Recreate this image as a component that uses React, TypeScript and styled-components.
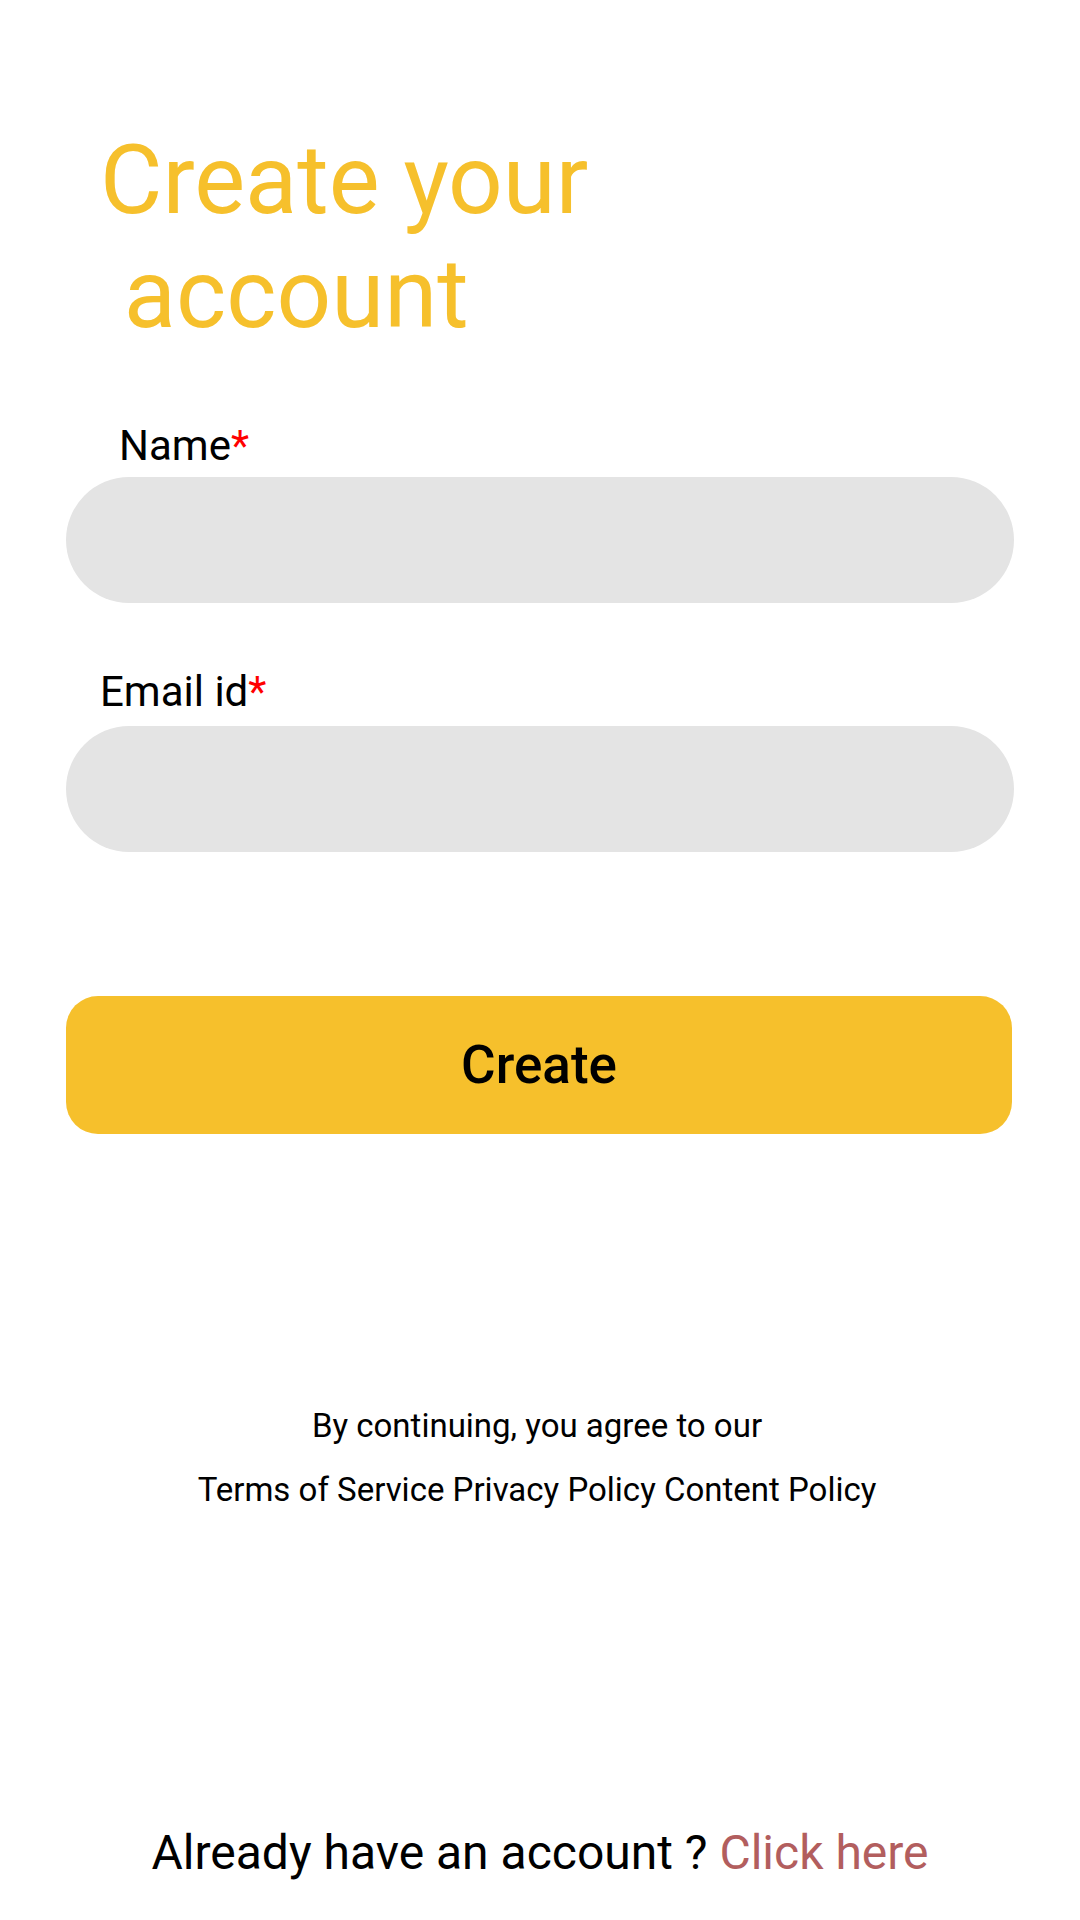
import styled, { createGlobalStyle } from "styled-components";

const GlobalStyle = createGlobalStyle`
  html, body {
    margin: 0;
    padding: 0;
    background: #ffffff;
  }

  body {
    font-family: Roboto, "Liberation Sans", Arial, sans-serif;
    color: #000000;
  }
`;

const Page = styled.div`
  width: 1080px;
  min-height: 1920px;
  display: flex;
  flex-direction: column;
  box-sizing: border-box;
`;

const Title = styled.h1`
  margin: 123px 0 0 100px;
  font-size: 96px;
  line-height: 114px;
  font-weight: 400;
  color: #f6c02c;
`;

const Label = styled.label<{ $indent: number; $gap: number }>`
  display: block;
  margin: ${({ $gap }) => $gap}px 0 0 ${({ $indent }) => $indent}px;
  font-size: 42px;
  line-height: 49px;
  font-weight: 400;
`;

const Required = styled.span`
  color: #ff0000;
`;

const Field = styled.input<{ $gap: number }>`
  display: block;
  margin: ${({ $gap }) => $gap}px 0 0 66px;
  width: 948px;
  height: 126px;
  box-sizing: border-box;
  padding: 0 48px;
  border: none;
  border-radius: 63px;
  background: #e4e4e4;
  font-family: inherit;
  font-size: 40px;
  outline: none;
`;

const CreateButton = styled.button`
  margin: 144px 0 0 66px;
  width: 946px;
  height: 138px;
  border: none;
  border-radius: 32px;
  background: #f6c02c;
  color: #000000;
  font-family: inherit;
  font-size: 53px;
  font-weight: 500;
  cursor: pointer;
`;

const Terms = styled.div`
  margin-top: 273px;
  padding-right: 6px;
  display: flex;
  flex-direction: column;
  align-items: center;
  gap: 26px;
  font-size: 33px;
  line-height: 38px;
`;

const Footer = styled.p`
  margin: 316px 0 0;
  text-align: center;
  font-size: 48px;
  line-height: 56px;
`;

const LinkText = styled.a`
  color: #b25e5e;
  text-decoration: none;
  cursor: pointer;
`;

export default function App() {
  return (
    <>
      <GlobalStyle />
      <Page>
        <Title>
          Create your
          <br />
          {"\u00a0account"}
        </Title>

        <Label $indent={119} $gap={70}>
          Name<Required>*</Required>
        </Label>
        <Field $gap={7} type="text" />

        <Label $indent={100} $gap={64}>
          Email id<Required>*</Required>
        </Label>
        <Field $gap={10} type="email" />

        <CreateButton>Create</CreateButton>

        <Terms>
          <span>By continuing, you agree to our</span>
          <span>Terms of Service Privacy Policy Content Policy</span>
        </Terms>

        <Footer>
          Already have an account ? <LinkText>Click here</LinkText>
        </Footer>
      </Page>
    </>
  );
}
